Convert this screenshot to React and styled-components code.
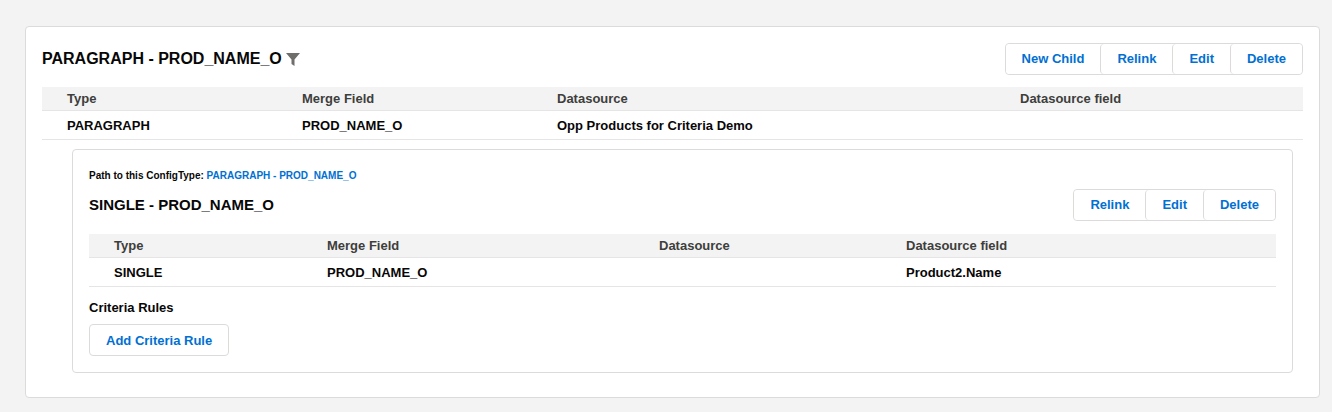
import React from 'react';
import styled, { createGlobalStyle } from 'styled-components';

const Global = createGlobalStyle`
  body { margin: 0; background: #f3f3f3; font-family: Arial, "Liberation Sans", sans-serif; color: #080707; }
`;

const Page = styled.div`
  padding: 26px 12px 20px 25px;
`;

const Card = styled.div`
  background: #fff;
  border: 1px solid #dddbda;
  border-radius: 4px;
  padding: ${p => p.$pad};
`;

const Head = styled.div`
  display: flex;
  justify-content: space-between;
  align-items: center;
  height: 31px;
  margin-bottom: ${p => p.$mb}px;
`;

const Title = styled.h2`
  margin: 0;
  font-size: ${p => p.$size}px;
  font-weight: 700;
  display: flex;
  align-items: center;
  gap: 4px;
`;

const Group = styled.div`
  display: flex;
  border: 1px solid #dddbda;
  border-radius: 4px;
  height: 30px;
`;

const Btn = styled.button`
  background: #fff;
  border: none;
  border-left: 1px solid #dddbda;
  &:first-child { border-left: none; }
  border-radius: 4px;
  padding: 0 ${p => p.$px || 16}px;
  font: 700 13px Arial, "Liberation Sans", sans-serif;
  color: #0070d2;
`;

const Single = styled(Btn)`
  border: 1px solid #dddbda;
  height: 32px;
  padding: 0 16px;
`;

const Row = styled.div`
  display: grid;
  grid-template-columns: ${p => p.$cols};
  align-items: center;
  height: ${p => p.$h}px;
  background: ${p => (p.$head ? '#f3f3f3' : '#fff')};
  border-bottom: 1px solid #e5e5e5;
  font-size: 13px;
  font-weight: 700;
  color: ${p => (p.$head ? '#3e3e3c' : '#080707')};
  & > span { padding-left: 25px; }
`;

const Path = styled.div`
  font-size: 10px;
  font-weight: 700;
  margin-bottom: 8px;
  a { color: #0070d2; text-decoration: none; }
`;

const Label = styled.div`
  font-size: 13px;
  font-weight: 700;
  margin: 13px 0 9px;
`;

const Funnel = () => (
  <svg width="14" height="14" viewBox="0 0 14 14"><path d="M0 1h14L8.5 7.5V14L5.5 12V7.5z" fill="#706e6b" /></svg>
);

const cols1 = '235px 255px 463px 1fr';
const cols2 = '213px 332px 247px 1fr';

export default function App() {
  return (
    <Page>
      <Global />
      <Card $pad="16px 16px 24px 16px">
        <Head $mb={13}>
          <Title $size={16}>PARAGRAPH - PROD_NAME_O <Funnel /></Title>
          <Group>
            <Btn>New Child</Btn><Btn>Relink</Btn><Btn>Edit</Btn><Btn>Delete</Btn>
          </Group>
        </Head>
        <Row $head $h={23} $cols={cols1}><span>Type</span><span>Merge Field</span><span>Datasource</span><span>Datasource field</span></Row>
        <Row $h={28} $cols={cols1}><span>PARAGRAPH</span><span>PROD_NAME_O</span><span>Opp Products for Criteria Demo</span><span></span></Row>
        <div style={{ padding: '9px 10px 0 30px' }}>
          <Card $pad="20px 16px 16px 16px">
            <Path>Path to this ConfigType: <a href="#">PARAGRAPH - PROD_NAME_O</a></Path>
            <Head $mb={14}>
              <Title $size={15}>SINGLE - PROD_NAME_O</Title>
              <Group>
                <Btn>Relink</Btn><Btn>Edit</Btn><Btn>Delete</Btn>
              </Group>
            </Head>
            <Row $head $h={23} $cols={cols2}><span>Type</span><span>Merge Field</span><span>Datasource</span><span>Datasource field</span></Row>
            <Row $h={28} $cols={cols2}><span>SINGLE</span><span>PROD_NAME_O</span><span></span><span>Product2.Name</span></Row>
            <Label>Criteria Rules</Label>
            <Single>Add Criteria Rule</Single>
          </Card>
        </div>
      </Card>
    </Page>
  );
}
